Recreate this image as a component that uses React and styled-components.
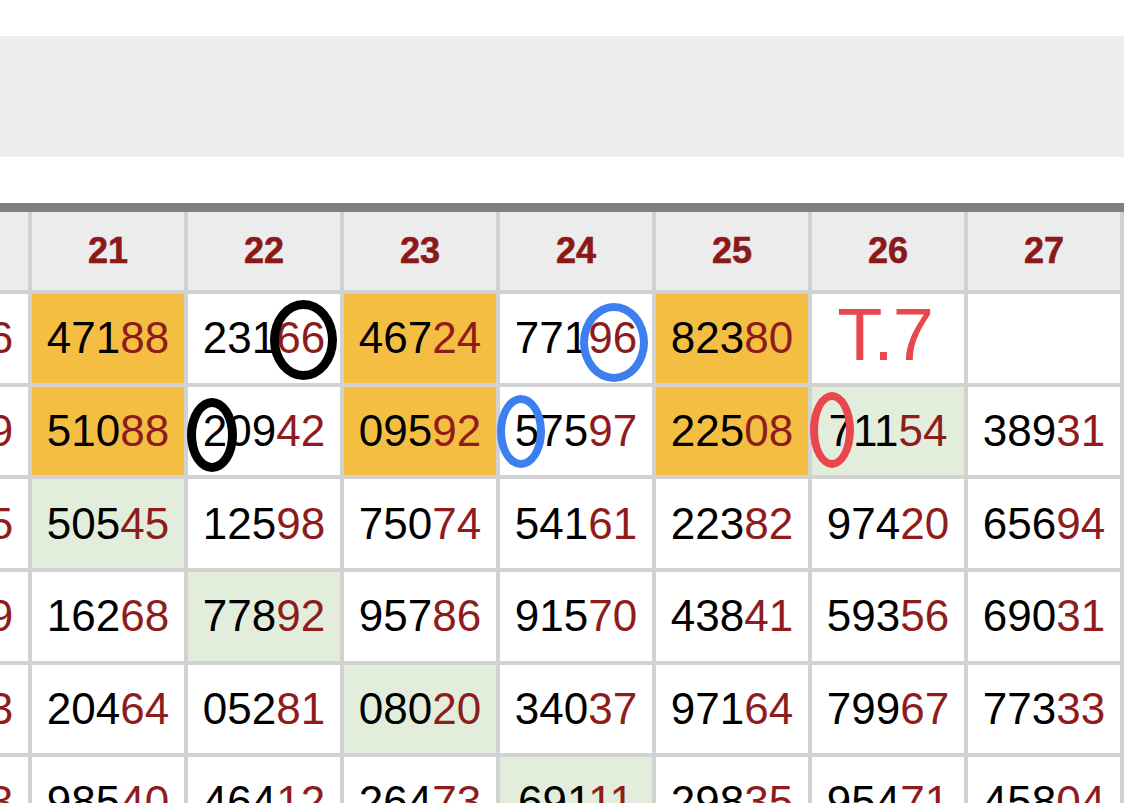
import React from 'react';
import styled, { createGlobalStyle } from 'styled-components';

const GlobalStyle = createGlobalStyle`
  body {
    margin: 0;
    background: #fff;
    font-family: "Liberation Sans", Arial, sans-serif;
  }
`;

const columns = [20, 21, 22, 23, 24, 25, 26, 27, 28];

// each cell: [number, background, marks]
const rows = [
  [
    ['57316'],
    ['47188', 'yellow'],
    ['23166', '', [{ c: 'black', x: 82, y: 6, w: 67, h: 80 }]],
    ['46724', 'yellow'],
    ['77196', '', [{ c: 'blue', x: 80, y: 9, w: 68, h: 79 }]],
    ['82380', 'yellow'],
    ['T.7', 'note'],
    [''],
    [''],
  ],
  [
    ['64279'],
    ['51088', 'yellow'],
    ['20942', '', [{ c: 'black', x: -1, y: 11, w: 50, h: 74 }]],
    ['09592', 'yellow'],
    ['57597', '', [{ c: 'blue', x: -3, y: 8, w: 48, h: 73 }]],
    ['22508', 'yellow'],
    ['71154', 'green', [{ c: 'red', x: -2, y: 5, w: 44, h: 76 }]],
    ['38931'],
    [''],
  ],
  [['31825'], ['50545', 'green'], ['12598'], ['75074'], ['54161'], ['22382'], ['97420'], ['65694'], ['']],
  [['80439'], ['16268'], ['77892', 'green'], ['95786'], ['91570'], ['43841'], ['59356'], ['69031'], ['']],
  [['27613'], ['20464'], ['05281'], ['08020', 'green'], ['34037'], ['97164'], ['79967'], ['77333'], ['']],
  [['49153'], ['98540'], ['46412'], ['26473'], ['69111', 'green'], ['29835'], ['95471'], ['45804'], ['']],
];

const bgs = { yellow: '#f4be42', green: '#e2eedb', '': '#fff', note: '#fff' };
const marks = { black: '#000', blue: '#3d7fee', red: '#e8474e' };

const Page = styled.div`
  padding-top: 36px;
  overflow: hidden;
`;

const Banner = styled.div`
  height: 121px;
  background: #ededed;
  margin-bottom: 46px;
`;

const TableWrap = styled.div`
  border-top: 9px solid #7f7f7f;
  overflow: hidden;
`;

const Grid = styled.div`
  display: grid;
  grid-template-columns: repeat(9, 152px);
  grid-template-rows: 78px;
  grid-auto-rows: 88.7px;
  gap: 4px;
  background: #d2d2d2;
  margin-left: -124px;
  width: max-content;
`;

const HeadCell = styled.div`
  background: #ececec;
  display: flex;
  align-items: center;
  justify-content: center;
  font-size: 36px;
  font-weight: 700;
  color: #8a1a1a;
  -webkit-text-stroke: 0.6px #8a1a1a;
`;

const Cell = styled.div`
  position: relative;
  background: ${(p) => bgs[p.$bg]};
  display: flex;
  align-items: center;
  justify-content: center;
  font-size: 44px;
  color: #000;
`;

const Tail = styled.span`
  color: #8e1c1c;
`;

const Note = styled.span`
  color: #e8474e;
  font-size: 74px;
  letter-spacing: -1px;
  margin-top: -8px;
  margin-right: 6px;
`;

const Mark = styled.span`
  position: absolute;
  z-index: 2;
  left: ${(p) => p.$x}px;
  top: ${(p) => p.$y}px;
  width: ${(p) => p.$w}px;
  height: ${(p) => p.$h}px;
  box-sizing: border-box;
  border: ${(p) => (p.$c === 'black' ? 9 : 8)}px solid ${(p) => marks[p.$c]};
  border-radius: 50%;
`;

const Number = ({ value }) => (
  <span>
    {value.slice(0, 3)}
    <Tail>{value.slice(3)}</Tail>
  </span>
);

export default function App() {
  return (
    <>
      <GlobalStyle />
      <Page>
        <Banner />
        <TableWrap>
          <Grid>
            {columns.map((c) => (
              <HeadCell key={c}>{c}</HeadCell>
            ))}
            {rows.map((row, r) =>
              row.map(([value, bg = '', ms = []], i) => (
                <Cell key={`${r}-${i}`} $bg={bg}>
                  {bg === 'note' ? <Note>{value}</Note> : <Number value={value} />}
                  {ms.map((m, k) => (
                    <Mark key={k} $c={m.c} $x={m.x} $y={m.y} $w={m.w} $h={m.h} />
                  ))}
                </Cell>
              ))
            )}
          </Grid>
        </TableWrap>
      </Page>
    </>
  );
}
